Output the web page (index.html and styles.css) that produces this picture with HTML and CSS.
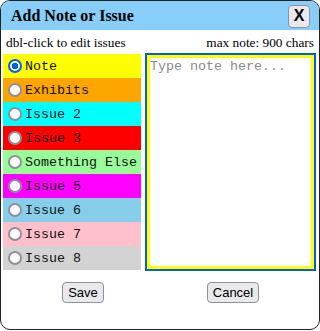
FILE: index.html
```html
<!DOCTYPE html>
<html>
<head>
<meta charset="utf-8">
<link rel="stylesheet" href="styles.css">
</head>
<body>
<div class="dialog">
  <div class="titlebar">
    <span class="title">Add Note or Issue</span>
    <button class="close">X</button>
  </div>
  <div class="hints">
    <span>dbl-click to edit issues</span>
    <span>max note: 900 chars</span>
  </div>
  <div class="main">
    <div class="list">
      <label class="item c-note"><input class="radio" type="radio" name="k" checked><span>Note</span></label>
      <label class="item c-exhibits"><input class="radio" type="radio" name="k"><span>Exhibits</span></label>
      <label class="item c-i2"><input class="radio" type="radio" name="k"><span>Issue 2</span></label>
      <label class="item c-i3"><input class="radio" type="radio" name="k"><span>Issue 3</span></label>
      <label class="item c-else"><input class="radio" type="radio" name="k"><span>Something Else</span></label>
      <label class="item c-i5"><input class="radio" type="radio" name="k"><span>Issue 5</span></label>
      <label class="item c-i6"><input class="radio" type="radio" name="k"><span>Issue 6</span></label>
      <label class="item c-i7"><input class="radio" type="radio" name="k"><span>Issue 7</span></label>
      <label class="item c-i8"><input class="radio" type="radio" name="k"><span>Issue 8</span></label>
    </div>
    <textarea class="note" placeholder="Type note here..."></textarea>
  </div>
  <div class="actions">
    <div class="cell cell-left"><button class="btn">Save</button></div>
    <div class="cell cell-right"><button class="btn">Cancel</button></div>
  </div>
</div>
</body>
</html>
```
FILE: styles.css
```css
html, body {
  margin: 0;
  padding: 0;
  background: #fff;
}
.dialog {
  width: 320px;
  height: 330px;
  box-sizing: border-box;
  border: 1px solid #222;
  border-radius: 10px;
  overflow: hidden;
  font-family: "Liberation Serif", serif;
  background: #fff;
}
.titlebar {
  height: 29px;
  background: #87cefa;
  display: flex;
  align-items: center;
  justify-content: space-between;
  padding: 0 9px 0 10px;
}
.title {
  font-weight: bold;
  font-size: 16px;
  color: #000;
}
.close {
  width: 22px;
  height: 23px;
  padding: 0;
  box-sizing: border-box;
  background: #e9e9ed;
  border: 1px solid #8f8f9d;
  border-radius: 4px;
  font-family: "Liberation Sans", sans-serif;
  font-weight: bold;
  font-size: 16px;
  color: #000;
  margin-top: 1px;
}
.hints {
  display: flex;
  justify-content: space-between;
  padding: 0 5px 0 5px;
  font-size: 13.33px;
  height: 23px;
  align-items: center;
  margin-top: 1px;
}
.main {
  display: flex;
  padding: 0 0 0 2px;
  gap: 6px;
  align-items: flex-start;
}
.list {
  width: 138px;
  display: flex;
  flex-direction: column;
}
.item {
  height: 24px;
  display: flex;
  align-items: center;
  font-family: "Liberation Mono", monospace;
  font-size: 13.33px;
  color: #111;
}
.radio {
  appearance: none;
  -webkit-appearance: none;
  margin: 0 3px 0 5px;
  width: 14px;
  height: 14px;
  box-sizing: border-box;
  border-radius: 50%;
  border: 2px solid #8f8f9d;
  background: #fff;
  flex: none;
}
.radio:checked {
  border-color: #0060df;
  background: radial-gradient(circle, #0060df 0 3px, #fff 3.6px);
}
.c-note { background: #ffff00; }
.c-exhibits { background: #ffa500; }
.c-i2 { background: #00ffff; }
.c-i3 { background: #ff0000; }
.c-else { background: #98fb98; }
.c-i5 { background: #ff00ff; }
.c-i6 { background: #87ceeb; }
.c-i7 { background: #ffc0cb; }
.c-i8 { background: #d3d3d3; }
.note {
  width: 167px;
  height: 214px;
  box-sizing: border-box;
  margin: 1px 0 0 0;
  border: 3px solid #ffff00;
  outline: 2px solid #005fdd;
  resize: none;
  padding: 1px 0;
  font-family: "Liberation Mono", monospace;
  font-size: 13.33px;
}
.note::placeholder {
  color: #8a8a8a;
}
.actions {
  display: flex;
  margin-top: 12px;
}
.cell {
  display: flex;
  justify-content: center;
}
.cell-left { width: 164px; }
.cell-right { width: 136px; }
.btn {
  height: 21px;
  padding: 0 5px;
  box-sizing: border-box;
  background: #e9e9ed;
  border: 1px solid #8f8f9d;
  border-radius: 4px;
  font-family: "Liberation Sans", sans-serif;
  font-size: 13px;
  color: #000;
}
```
